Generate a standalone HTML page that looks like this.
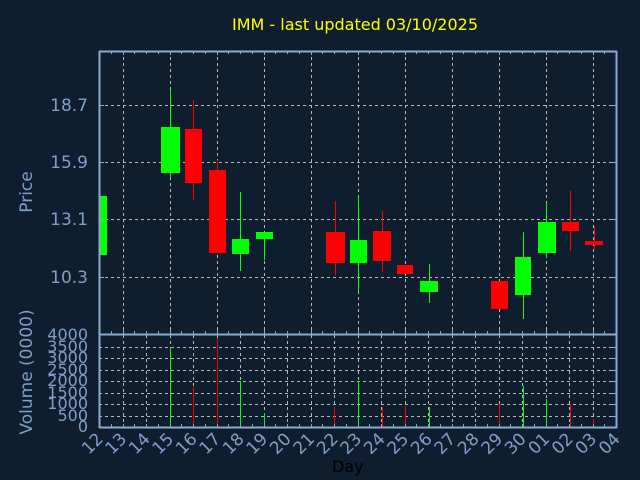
<!DOCTYPE html>
<html><head><meta charset="utf-8"><style>
html,body{margin:0;padding:0;background:#0f1e2f;}
svg{display:block;font-family:"DejaVu Sans","Liberation Sans",sans-serif;}
.t{fill:#7f9fc8;font-size:17px;}
.v{fill:#7f9fc8;font-size:16px;}
</style></head><body>
<svg id="s" width="640" height="480" viewBox="0 0 640 480" xmlns="http://www.w3.org/2000/svg" shape-rendering="crispEdges">
<rect width="640" height="480" fill="#0f1e2f"/>
<text x="355" y="30" fill="#ffff00" font-size="16" text-anchor="middle" shape-rendering="auto">IMM - last updated 03/10/2025</text>
<g id="grid"></g>
<g stroke-width="1">
<rect x="99" y="196" width="8" height="59" fill="#00ff00"/>
<line x1="170.5" y1="90" x2="170.5" y2="178" stroke="#00ff00"/><rect x="161" y="127" width="19" height="46" fill="#00ff00"/>
<line x1="193.5" y1="100" x2="193.5" y2="200" stroke="#ff0000"/><rect x="185" y="129" width="17" height="54" fill="#ff0000"/>
<line x1="217.5" y1="160" x2="217.5" y2="253" stroke="#ff0000"/><rect x="209" y="170" width="17" height="83" fill="#ff0000"/>
<line x1="240.5" y1="192" x2="240.5" y2="271" stroke="#00ff00"/><rect x="232" y="239" width="17" height="15" fill="#00ff00"/>
<line x1="264.5" y1="232" x2="264.5" y2="260" stroke="#00ff00"/><rect x="256" y="232" width="17" height="7" fill="#00ff00"/>
<line x1="335.5" y1="201" x2="335.5" y2="275" stroke="#ff0000"/><rect x="326" y="232" width="19" height="31" fill="#ff0000"/>
<line x1="358.5" y1="197" x2="358.5" y2="291" stroke="#00ff00"/><rect x="350" y="240" width="17" height="23" fill="#00ff00"/>
<line x1="382.5" y1="211" x2="382.5" y2="272" stroke="#ff0000"/><rect x="373" y="231" width="18" height="30" fill="#ff0000"/>
<rect x="397" y="265" width="16" height="9" fill="#ff0000"/>
<line x1="429.5" y1="264" x2="429.5" y2="303" stroke="#00ff00"/><rect x="420" y="281" width="18" height="11" fill="#00ff00"/>
<rect x="491" y="281" width="17" height="28" fill="#ff0000"/>
<line x1="523.5" y1="232" x2="523.5" y2="319" stroke="#00ff00"/><rect x="515" y="257" width="16" height="38" fill="#00ff00"/>
<line x1="546.5" y1="203" x2="546.5" y2="258" stroke="#00ff00"/><rect x="538" y="222" width="18" height="31" fill="#00ff00"/>
<line x1="570.5" y1="191" x2="570.5" y2="251" stroke="#ff0000"/><rect x="562" y="222" width="17" height="9" fill="#ff0000"/>
<line x1="594.5" y1="226" x2="594.5" y2="249" stroke="#ff0000"/><rect x="585" y="241" width="18" height="4" fill="#ff0000"/>
</g>
<g stroke-width="1">
<line x1="170.5" y1="347" x2="170.5" y2="427" stroke="#00ff00"/>
<line x1="193.5" y1="387" x2="193.5" y2="427" stroke="#ff0000"/>
<line x1="217.5" y1="338" x2="217.5" y2="427" stroke="#ff0000"/>
<line x1="240.5" y1="381" x2="240.5" y2="427" stroke="#00ff00"/>
<line x1="264.5" y1="413" x2="264.5" y2="427" stroke="#00ff00"/>
<line x1="334.5" y1="407" x2="334.5" y2="427" stroke="#ff0000"/>
<line x1="358.5" y1="381" x2="358.5" y2="427" stroke="#00ff00"/>
<line x1="382.5" y1="407" x2="382.5" y2="427" stroke="#ff0000"/>
<line x1="405.5" y1="406" x2="405.5" y2="427" stroke="#ff0000"/>
<line x1="429.5" y1="407" x2="429.5" y2="427" stroke="#00ff00"/>
<line x1="499.5" y1="404" x2="499.5" y2="427" stroke="#ff0000"/>
<line x1="523.5" y1="386" x2="523.5" y2="427" stroke="#00ff00"/>
<line x1="546.5" y1="399" x2="546.5" y2="427" stroke="#00ff00"/>
<line x1="570.5" y1="404" x2="570.5" y2="427" stroke="#ff0000"/>
<line x1="593.5" y1="419" x2="593.5" y2="427" stroke="#ff0000"/>
</g>
<g id="axes"></g>
<g shape-rendering="auto">
<text class="t" x="88" y="111" text-anchor="end">18.7</text>
<text class="t" x="88" y="168" text-anchor="end">15.9</text>
<text class="t" x="88" y="225" text-anchor="end">13.1</text>
<text class="t" x="88" y="283" text-anchor="end">10.3</text>
<text class="t" transform="translate(32,192) rotate(-90)" text-anchor="middle">Price</text>
<text class="t" transform="translate(32,372) rotate(-90)" text-anchor="middle">Volume (0000)</text>
<g class="v" text-anchor="end">
<text x="88" y="340">4000</text><text x="88" y="352">3500</text><text x="88" y="363">3000</text><text x="88" y="375">2500</text><text x="88" y="386">2000</text><text x="88" y="398">1500</text><text x="88" y="409">1000</text><text x="88" y="421">500</text><text x="88" y="432">0</text>
</g>
<g class="t" text-anchor="end">
<text transform="translate(104,440) rotate(-45)">12</text>
<text transform="translate(127.5,440) rotate(-45)">13</text>
<text transform="translate(151,440) rotate(-45)">14</text>
<text transform="translate(174.5,440) rotate(-45)">15</text>
<text transform="translate(198,440) rotate(-45)">16</text>
<text transform="translate(221.5,440) rotate(-45)">17</text>
<text transform="translate(245,440) rotate(-45)">18</text>
<text transform="translate(268.5,440) rotate(-45)">19</text>
<text transform="translate(292,440) rotate(-45)">20</text>
<text transform="translate(315.5,440) rotate(-45)">21</text>
<text transform="translate(339,440) rotate(-45)">22</text>
<text transform="translate(362.5,440) rotate(-45)">23</text>
<text transform="translate(386,440) rotate(-45)">24</text>
<text transform="translate(409.5,440) rotate(-45)">25</text>
<text transform="translate(433,440) rotate(-45)">26</text>
<text transform="translate(456.5,440) rotate(-45)">27</text>
<text transform="translate(480,440) rotate(-45)">28</text>
<text transform="translate(503.5,440) rotate(-45)">29</text>
<text transform="translate(527,440) rotate(-45)">30</text>
<text transform="translate(550.5,440) rotate(-45)">01</text>
<text transform="translate(574,440) rotate(-45)">02</text>
<text transform="translate(597.5,440) rotate(-45)">03</text>
<text transform="translate(621,440) rotate(-45)">04</text>
</g>
<text x="332" y="472" fill="#000000" font-size="16">Day</text>
</g>
</svg>
<script>
var NS="http://www.w3.org/2000/svg";
function L(g,x1,y1,x2,y2,c,d,w){var l=document.createElementNS(NS,"line");l.setAttribute("x1",x1);l.setAttribute("y1",y1);l.setAttribute("x2",x2);l.setAttribute("y2",y2);l.setAttribute("stroke",c);l.setAttribute("stroke-width",w||1);if(d)l.setAttribute("stroke-dasharray",d);document.getElementById(g).appendChild(l);}
var gc="#b8b8b8",ac="#8aaad0";
[105,162,219,277].forEach(function(y){L("grid",99,y+.5,617,y+.5,gc,"3,3");});
for(var i=1;i<22;i+=2){var x=Math.round(99+23.5*i)+.5;L("grid",x,51,x,334,gc,"3,3");}
for(var i=1;i<22;i++){var x=Math.round(99+23.5*i)+.5;L("grid",x,335,x,427,gc,"3,3");}
for(var k=1;k<8;k++){var y=Math.round(427-11.5*k)+.5;L("grid",99,y,617,y,gc,"3,3");}
L("axes",99.5,51,99.5,428,ac,null,2);L("axes",616.5,51,616.5,428,ac,null,2);
L("axes",99,51.5,617,51.5,ac,null,2);L("axes",99,334.5,617,334.5,ac,null,2);L("axes",99,427.5,617,427.5,ac,null,2);
for(var i=0;i<=44;i++){var x=Math.round(99+11.75*i)+.5;var len=(i%4==2)?4:3;
L("axes",x,51,x,51+len,ac);L("axes",x,334,x,334-len,ac);L("axes",x,427,x,427-3,ac);}
[105,162,219,277].forEach(function(y){L("axes",99,y+.5,104,y+.5,ac);L("axes",612,y+.5,617,y+.5,ac);});
for(var k=1;k<8;k++){var y=Math.round(427-11.5*k)+.5;L("axes",612,y,617,y,ac);}
</script>
</body></html>
